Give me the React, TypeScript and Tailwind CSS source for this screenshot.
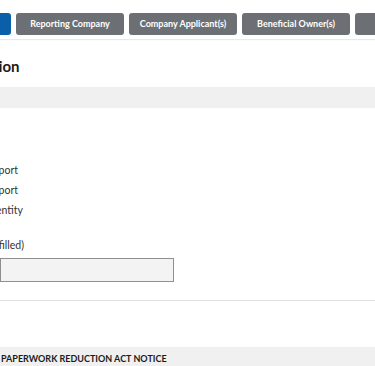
import React from "react";

function Tab({ label }: { label: string }) {
  return (
    <div className="flex h-[22px] w-[108px] shrink-0 items-center justify-center rounded-[3px] bg-[#6c7074] text-[9px] font-bold text-white">
      {label}
    </div>
  );
}

function Clip({ text, end, className = "" }: { text: string; end: number; className?: string }) {
  return (
    <div className="flex justify-end" style={{ width: end }}>
      <div className={"whitespace-nowrap " + className}>{text}</div>
    </div>
  );
}

export default function App() {
  return (
    <div
      className="h-[366px] w-[375px] overflow-hidden bg-white text-[#333]"
      style={{ fontFamily: "Lato, 'Liberation Sans', sans-serif" }}
    >
      <div className="flex gap-[5px] pt-[13px] pb-[4px] shadow-[0_1px_1px_#e8e8e8]">
        <div className="h-[22px] w-[11px] shrink-0 rounded-r-[3px] bg-[#0b5fa9]" />
        <Tab label="Reporting Company" />
        <Tab label="Company Applicant(s)" />
        <Tab label="Beneficial Owner(s)" />
        <div className="h-[22px] w-[108px] shrink-0 rounded-[3px] bg-[#6c7074]" />
      </div>
      <div className="mt-[17px]">
        <Clip text="Filing Information" end={19.5} className="text-[15px] font-bold leading-[20px] text-[#1b1b1b]" />
      </div>
      <div className="mt-[11px] h-[21px] bg-[#f0f0f0]" />
      <div className="mt-[52px] flex flex-col text-[10.5px] leading-[20px]">
        <Clip text="Initial report" end={18} />
        <Clip text="Correct or amend prior report" end={18} />
        <Clip text="Newly exempt entity" end={23} />
      </div>
      <div className="mt-[15px] text-[10.5px] leading-[20px]">
        <Clip text="Date prepared (auto-filled)" end={24} />
      </div>
      <div className="mt-[3px] h-[24px] w-[174px] border border-[#8f8f8f] bg-[#f3f3f3]" />
      <div className="mt-[18px] h-px bg-[#e2e2e2]" />
      <div className="mt-[46px] flex h-[30px] items-start bg-[#f0f0f0] pl-[1px] pt-[5px] text-[9px] font-bold text-[#1b1b1b]">
        PAPERWORK REDUCTION ACT NOTICE
      </div>
    </div>
  );
}
